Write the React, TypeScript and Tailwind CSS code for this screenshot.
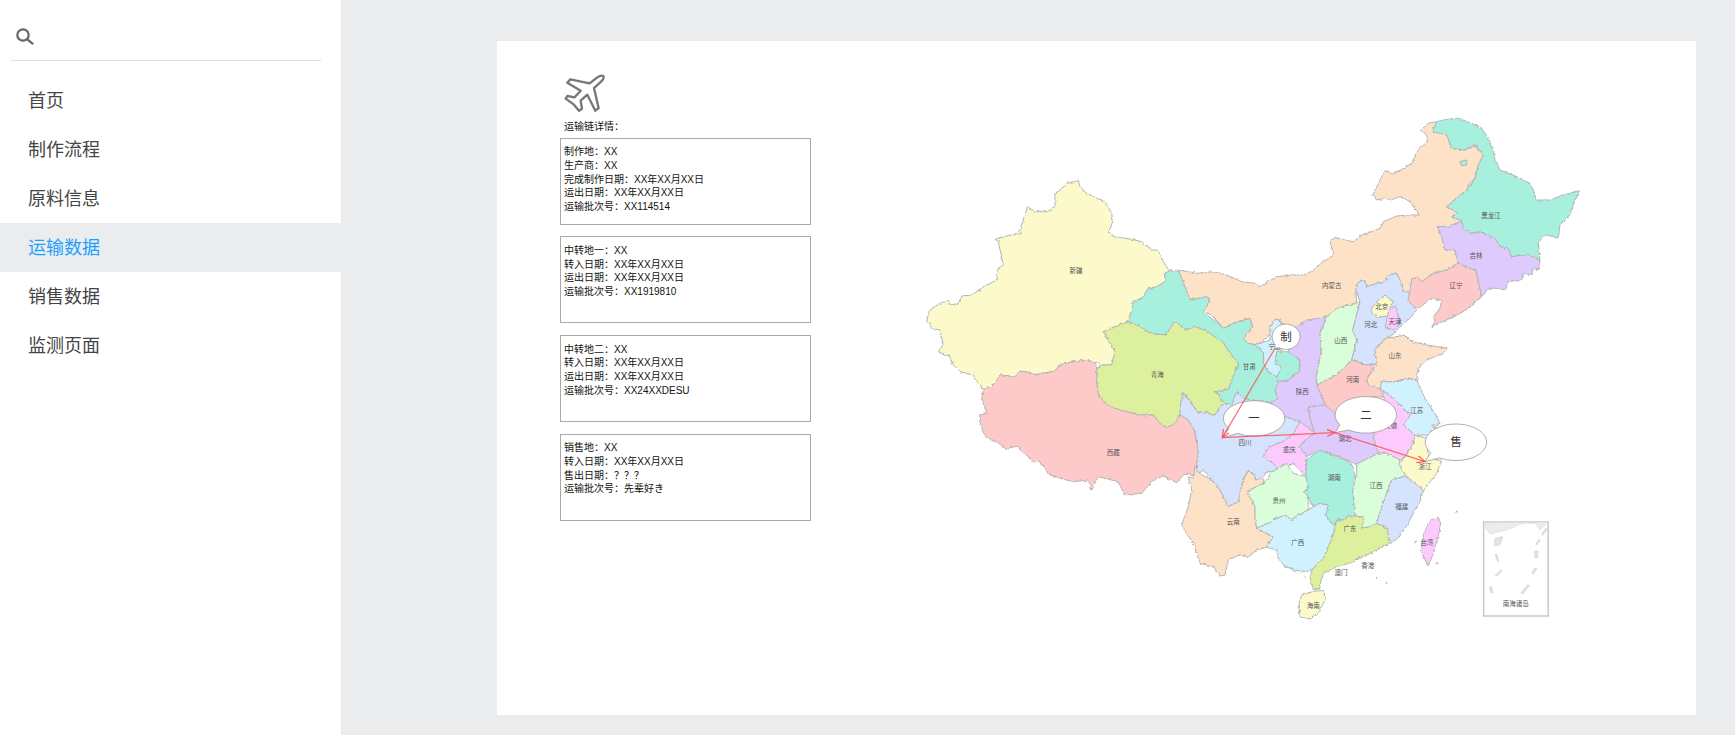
// trace frames: origin of each crop, points are in 3x crop pixels
type Frame = [number, number];
const A: Frame = [920, 170];
const B: Frame = [920, 340];
const C: Frame = [1180, 100];
const D: Frame = [1160, 310];
const E: Frame = [1160, 460];

type Seg = [Frame, string];

const toPoints = (segs: Seg[]) =>
  segs
    .map(([f, s]) =>
      s
        .trim()
        .split(/\s+/)
        .map((p) => {
          const [x, y] = p.split(",").map(Number);
          return `${(f[0] + x / 3).toFixed(1)},${(f[1] + y / 3).toFixed(1)}`;
        })
        .join(" ")
    )
    .join(" ");

const CREAM = "#fcfacb";
const TEAL = "#a6f0dd";
const PEACH = "#fee2c8";
const LIME = "#dcf09e";
const ROSE = "#fec9c9";
const BLUE = "#d6e3fe";
const PURPLE = "#dfcafd";
const PINK = "#fdcafd";
const MINT = "#d9fed9";
const SKY = "#cff2fe";

const provinces: { fill: string; segs: Seg[] }[] = [
  {
    fill: CREAM,
    segs: [
      [A, "440,40 475,32 480,50 500,70 530,85 555,95 575,130 578,155 566,185 580,200 630,207 665,215 695,240 715,240 730,275 748,303 735,310 735,335 710,350 685,355 665,385 640,395 630,440 620,457 550,485 565,510 585,545 575,585"],
      [B, "545,75 525,65 490,60 425,72 400,95 365,100 345,105 320,95 300,95 285,110 240,105 215,140 190,148 170,125 160,105 120,95 100,75 90,50 55,35"],
      [A, "70,525 60,480 35,475 20,445 30,420 60,400 85,392 90,405 115,400 125,378 155,375 190,350 230,330 235,295 250,285 235,215 225,208 290,190 305,195 298,185 322,112 350,125 385,125 405,110 405,70 425,58"],
    ],
  },
  {
    fill: PEACH,
    segs: [
      [C, "770,65 758,95 800,105 815,145 855,150 885,135 910,165 895,195 885,235 868,250 860,270 830,295 800,320 835,340 815,350 845,362 810,380 772,380 785,410 795,450 825,450 835,490 800,510 760,520 725,545 715,535 695,535 690,575 670,575 665,550 650,520 625,525 615,545 590,550 560,560 555,545 540,540 527,570 530,605 490,630 440,650 400,660 370,695 305,670 300,655 270,675 270,705 230,735 205,730 190,715 218,680 210,655 175,665 130,685 100,650 70,630 90,605 85,590 60,595 30,600 15,570"],
      [A, "775,300"],
      [C, "50,520 100,515 140,525 185,545 225,550 240,560 290,530 340,525 375,525 400,510 430,485 462,465 450,425 465,412 490,420 520,425 545,405 575,395 600,385 610,365 650,348 690,345 718,345 690,305 660,290 635,300 615,295 590,300 578,285 600,240 615,212 640,222 665,208 695,190 715,150 742,125 740,105 722,90 745,70"],
    ],
  },
  {
    fill: TEAL,
    segs: [
      [A, "748,303 775,300 795,350 810,390 860,380 870,395 850,425 900,465"],
      [C, "100,650 130,685 175,665 210,655 218,680 190,715 205,730 230,735"],
      [D, "310,125 312,165 325,185 350,200 365,170 345,160 350,125 385,125 420,150 418,185 385,210 355,215 345,240 355,265 330,280 250,265 230,245 215,285 195,280 165,245 205,238 235,160 190,100 140,62 105,50 80,60 45,35"],
      [A, "735,495 690,490 660,470 640,460 620,457 630,440 640,395 665,385 685,355 710,350 735,335 735,310"],
    ],
  },
  {
    fill: LIME,
    segs: [
      [A, "620,457 550,485 565,510 585,545 575,585"],
      [B, "545,75 530,85 530,130 535,165 560,195 600,210 660,225 700,225 720,250 740,262 760,255 780,225 782,190 790,158"],
      [D, "90,270 115,310 130,305 165,315 180,290 195,280 165,245 205,238 235,160 190,100 140,62 105,50 80,60 45,35"],
      [A, "735,495 690,490 660,470 640,460"],
    ],
  },
  {
    fill: ROSE,
    segs: [
      [B, "190,148 215,140 240,105 285,110 300,95 320,95 345,105 365,100 400,95 425,72 490,60 525,65 530,85 530,130 535,165 560,195 600,210 660,225 700,225 720,250 740,262 760,255 780,225 805,240 825,275 835,340 830,375 825,410 805,400 790,405 770,428 730,408 700,420 665,460 615,465 595,425 535,410 515,450 505,420 460,425 420,415 390,405 360,365 340,365 290,320 270,320 262,330 230,305 195,290 180,245 178,225 200,220 185,175"],
    ],
  },
  {
    fill: BLUE,
    segs: [
      [B, "790,158 782,190 780,225 805,240 825,275 835,340 830,375 825,410"],
      [E, "130,30 155,60 180,90 205,140 235,125 250,55 265,32 280,40 285,60 310,55 320,35 355,35"],
      [D, "400,370 420,335 405,330 375,320 330,280 250,265 230,245 215,285 195,280 180,290 165,315 130,305 115,310"],
    ],
  },
  {
    fill: PEACH,
    segs: [
      [E, "85,50 100,55 105,20 118,40 155,60 180,90 205,140 235,125 250,60 265,32 285,45 285,60 312,55 310,68 262,95 285,140 285,175 290,205 340,230 320,262 290,270 265,290 240,285 205,298 195,345 180,348 160,320 120,310 115,290 100,250 70,205 65,195 85,140 95,90"],
    ],
  },
  {
    fill: SKY,
    segs: [[D, "285,105 330,90 330,50 345,28 360,30 385,100 350,125 345,160 365,170 350,200 325,185 312,165 310,125"]],
  },
  {
    fill: PURPLE,
    segs: [[D, "500,20 480,70 485,115 470,195 470,225 490,270 495,285 445,290 450,325 465,370 420,335 405,330 375,320 330,280 355,265 345,240 355,215 385,210 418,185 420,150 385,125 395,60 440,30"]],
  },
  {
    fill: MINT,
    segs: [[D, "500,20 530,-5 600,-25 578,60 590,90 575,150 530,195 500,210 470,225 470,195 485,115 480,70"]],
  },
  {
    fill: BLUE,
    segs: [
      [C, "540,540 555,545 560,560 590,550 615,545 625,525 650,520 665,550 670,575 690,575 682,600 712,628 690,655 665,675 650,690 645,700"],
      [D, "680,85 645,115 648,160 620,165 590,155 575,150 590,90 578,60 600,-25"],
      [C, "527,570"],
    ],
  },
  { fill: CREAM, segs: [[C, "575,625 595,600 615,585 640,605 630,620 625,650 590,650 575,640"]] },
  { fill: PINK, segs: [[C, "625,640 635,620 650,625 652,645 665,668 650,680 640,690 615,680 620,660"]] },
  {
    fill: ROSE,
    segs: [[C, "835,490 800,510 760,520 725,545 715,535 695,535 690,575 682,600 712,628 735,610 755,595 785,600 780,625 760,650 765,665 755,680 800,660 850,635 900,595 905,570 888,510 870,505"]],
  },
  {
    fill: PURPLE,
    segs: [[C, "772,380 810,380 845,362 850,385 870,400 900,395 945,415 960,440 985,445 995,470 1045,462 1080,482 1075,510 1060,505 1055,525 1030,520 1025,540 985,545 975,570 950,565 925,565 905,590 888,510 870,505 835,490 825,450 795,450 785,410"]],
  },
  {
    fill: TEAL,
    segs: [[C, "770,65 800,58 835,55 880,72 905,85 925,115 940,150 945,180 960,210 1000,225 1050,250 1060,270 1065,300 1110,300 1150,285 1198,272 1185,300 1170,345 1140,375 1135,415 1100,405 1075,425 1080,482 1045,462 995,470 985,445 960,440 945,415 900,395 870,400 850,385 845,362 815,350 835,340 800,320 830,295 860,270 885,235 895,195 910,165 885,135 855,150 815,145 800,105 758,95"]],
  },
  { fill: TEAL, segs: [[C, "840,185 858,180 860,195 845,197"]] },
  {
    fill: PEACH,
    segs: [[D, "620,205 650,170 645,120 680,85 735,75 755,95 800,105 862,115 850,130 800,150 775,175 770,210 745,205 700,215 665,215 670,240 625,225"]],
  },
  {
    fill: ROSE,
    segs: [[D, "470,225 500,210 530,195 575,150 620,165 648,160 640,175 620,205 625,225 670,240 665,255 672,262 640,260 525,310 495,285 490,270"]],
  },
  {
    fill: PURPLE,
    segs: [[D, "445,290 495,285 525,310 600,320 650,345 640,380 655,430 590,462 570,455 540,440 480,420 440,440 418,410 440,385 465,370 450,325"]],
  },
  {
    fill: PINK,
    segs: [[D, "420,335 465,370 440,385 418,410 440,440 438,500 400,460 355,480 340,460 310,440 325,410 370,395 400,370"]],
  },
  {
    fill: PINK,
    segs: [[D, "660,235 700,265 740,305 755,310 730,345 765,375 760,400 740,435 720,450 680,430 655,430 640,380 650,345 672,262"]],
  },
  {
    fill: SKY,
    segs: [[D, "665,215 700,215 745,205 770,210 795,265 830,320 840,340 815,355 810,375 765,375 730,345 755,310 740,305 700,265 660,235"]],
  },
  { fill: "#e8e89a", segs: [[D, "815,345 828,345 825,355"]] },
  {
    fill: CREAM,
    segs: [
      [D, "765,375 800,385 805,445 845,450 830,490"],
      [E, "795,85 790,95 740,50 725,30 718,10"],
      [D, "740,435 760,400"],
    ],
  },
  {
    fill: TEAL,
    segs: [
      [D, "438,500 440,450 480,420 520,435 575,462 595,530"],
      [E, "578,90 590,170 585,168 550,180 530,180 525,198 510,185 497,165 505,135 480,130 460,140 445,110 430,95 445,85"],
    ],
  },
  {
    fill: MINT,
    segs: [[E, "262,95 310,68 325,55 330,40 380,10 400,40 438,50 445,85 430,95 445,110 445,150 415,165 395,180 375,165 340,180 315,195 290,205 285,175 285,140"]],
  },
  {
    fill: MINT,
    segs: [
      [D, "590,462 655,430 680,430 720,450"],
      [E, "718,10 725,30 738,48 695,60 680,100 665,140 650,190 630,200 605,205 612,172 585,168 578,90 590,40"],
    ],
  },
  {
    fill: BLUE,
    segs: [[E, "738,48 790,90 780,125 765,150 745,190 715,235 690,250 680,205 650,190 665,140 680,100 695,60"]],
  },
  {
    fill: SKY,
    segs: [[E, "290,205 315,195 340,180 375,165 395,180 415,165 445,150 460,140 480,130 505,135 497,165 510,185 525,198 520,225 505,260 490,295 460,325 440,335 400,330 370,315 355,295 350,270 320,262 340,230"]],
  },
  {
    fill: LIME,
    segs: [[E, "525,198 530,180 550,180 565,168 585,168 612,172 605,205 630,200 650,190 680,205 690,250 640,275 610,290 570,310 530,320 490,340 480,375 480,385 460,390 450,350 460,325 490,295 505,260 520,225"]],
  },
  { fill: CREAM, segs: [[E, "425,405 465,393 492,392 495,420 475,460 445,477 420,470 417,430"]] },
  { fill: PINK, segs: [[E, "815,180 835,172 842,190 835,230 820,280 805,318 795,300 782,270 790,230 800,200"]] },
];

const labels: [Frame, number, number, string][] = [
  [A, 468, 302, "新疆"],
  [B, 580, 336, "西藏"],
  [B, 712, 104, "青海"],
  [D, 268, 168, "甘肃"],
  [C, 455, 555, "内蒙古"],
  [C, 933, 345, "黑龙江"],
  [C, 888, 465, "吉林"],
  [C, 828, 555, "辽宁"],
  [C, 605, 620, "北京"],
  [C, 645, 665, "天津"],
  [C, 572, 672, "河北"],
  [C, 482, 722, "山西"],
  [C, 285, 740, "宁夏"],
  [D, 427, 245, "陕西"],
  [D, 578, 207, "河南"],
  [D, 705, 135, "山东"],
  [D, 770, 300, "江苏"],
  [D, 255, 396, "四川"],
  [D, 555, 384, "湖北"],
  [D, 388, 418, "重庆"],
  [D, 692, 345, "安徽"],
  [D, 795, 468, "浙江"],
  [E, 523, 52, "湖南"],
  [E, 648, 75, "江西"],
  [E, 357, 120, "贵州"],
  [E, 725, 140, "福建"],
  [E, 220, 185, "云南"],
  [E, 413, 246, "广西"],
  [E, 570, 206, "广东"],
  [E, 543, 336, "澳门"],
  [E, 623, 315, "香港"],
  [E, 800, 246, "台湾"],
  [E, 460, 435, "海南"],
  [E, 1067, 430, "南海诸岛"],
];

// dashes of the nine-dash line in the inset
const insetDashes = [
  "1005,235 1028,230 1020,255 1003,257",
  "1006,283 1011,282 1016,303 1012,304",
  "1022,330 1026,333 1010,349 1006,346",
  "988,381 995,380 999,398 993,399",
  "1103,374 1108,377 1088,402 1083,399",
  "1125,323 1131,326 1120,342 1115,339",
  "1124,273 1133,273 1133,293 1124,293",
  "1137,238 1141,241 1130,255 1127,252",
  "1157,205 1162,208 1148,226 1145,223",
];

const islets: [number, number][] = [
  [590, 297],
  [598, 292],
  [650, 353],
  [680, 368],
  [765, 245],
  [830, 310],
  [890, 155],
  [435, 352],
];

const bubbles = [
  { cx: D[0] + 378 / 3, cy: D[1] + 80 / 3, rx: 14, ry: 12.7, tip: [D[0] + 345 / 3, D[1] + 115 / 3], text: "制" },
  { cx: D[0] + 282 / 3, cy: D[1] + 325 / 3, rx: 30.7, ry: 17.7, tip: [D[0] + 187 / 3, D[1] + 383 / 3], text: "一" },
  { cx: D[0] + 618 / 3, cy: D[1] + 315 / 3, rx: 30.7, ry: 18.3, tip: [D[0] + 525 / 3, D[1] + 368 / 3], text: "二" },
  { cx: D[0] + 888 / 3, cy: D[1] + 397 / 3, rx: 30.7, ry: 18.3, tip: [D[0] + 795 / 3, D[1] + 455 / 3], text: "售" },
];

const bubblePath = (b: (typeof bubbles)[number]) => {
  const t = Math.atan2((b.tip[1] - b.cy) / b.ry, (b.tip[0] - b.cx) / b.rx);
  const at = (a: number) => `${(b.cx + b.rx * Math.cos(a)).toFixed(1)} ${(b.cy + b.ry * Math.sin(a)).toFixed(1)}`;
  return `M${at(t + 0.2)} A${b.rx} ${b.ry} 0 1 1 ${at(t - 0.2)} L${b.tip[0]} ${b.tip[1]} Z`;
};

const routes = [
  [bubbles[0].tip, bubbles[1].tip],
  [bubbles[1].tip, bubbles[2].tip],
  [bubbles[2].tip, bubbles[3].tip],
];

const ChinaMap = () => (
  <svg viewBox="920 110 670 520" width={670} height={520} className="shrink-0">
    <defs>
      <marker id="head" markerUnits="userSpaceOnUse" markerWidth="10" markerHeight="10" refX="8" refY="4" orient="auto">
        <path d="M0 0.5L8 4L0 7.5" fill="none" stroke="#ff4a4a" strokeWidth="1.1" />
      </marker>
      {/* roughens the traced borders, same displacement on both sides of a shared edge */}
      <filter id="rough" x="-2%" y="-2%" width="104%" height="104%">
        <feTurbulence type="fractalNoise" baseFrequency="0.3" numOctaves="2" seed="4" result="n" />
        <feDisplacementMap in="SourceGraphic" in2="n" scale="3.2" xChannelSelector="R" yChannelSelector="G" />
        <feGaussianBlur stdDeviation="0.3" />
      </filter>
      <filter id="soft">
        <feGaussianBlur stdDeviation="0.25" />
      </filter>
    </defs>
    <g filter="url(#rough)">
      {provinces.map((p, i) => (
        <polygon key={i} points={toPoints(p.segs)} fill={p.fill} stroke="#b4b4b4" strokeWidth="1" strokeLinejoin="round" />
      ))}
      {islets.map(([x, y], i) => (
        <circle key={i} cx={E[0] + x / 3} cy={E[1] + y / 3} r="0.9" fill="#aaa" />
      ))}
    </g>

    <g filter="url(#soft)">
      <rect x={E[0] + 971 / 3} y={E[1] + 186 / 3} width={64.5} height={94} fill="#fff" stroke="#c9c9c9" strokeWidth="1.5" />
      <polygon
        points={toPoints([[E, "972,195 990,187 1163,187 1140,210 1125,190 1090,190 1040,210 990,222"]])}
        fill="#ececec"
        stroke="#d4d4d4"
        strokeWidth="0.5"
      />
      {insetDashes.map((d, i) => (
        <polygon key={i} points={toPoints([[E, d]])} fill="#e4e4e4" stroke="#c4c4c4" strokeWidth="0.5" />
      ))}
    </g>

    {labels.map(([f, x, y, t]) => (
      <text
        key={t}
        x={f[0] + x / 3}
        y={f[1] + y / 3}
        textAnchor="middle"
        dominantBaseline="central"
        fontSize="6.5"
        fill="#555"
      >
        {t}
      </text>
    ))}

    {bubbles.map((b) => (
      <path key={b.text} d={bubblePath(b)} fill="#fff" stroke="#9a9a9a" strokeWidth="0.8" />
    ))}
    {routes.map(([from, to], i) => (
      <line
        key={i}
        x1={from[0]}
        y1={from[1]}
        x2={to[0]}
        y2={to[1]}
        stroke="#ff4a4a"
        strokeOpacity="0.8"
        strokeWidth="1.2"
        markerEnd="url(#head)"
      />
    ))}
    {bubbles.map((b) => (
      <text
        key={b.text}
        x={b.cx}
        y={b.cy}
        textAnchor="middle"
        dominantBaseline="central"
        fontSize="11.5"
        fill="#333"
      >
        {b.text}
      </text>
    ))}
  </svg>
);

const navItems = ["首页", "制作流程", "原料信息", "运输数据", "销售数据", "监测页面"];

const detailBoxes = [
  ["制作地：XX", "生产商：XX", "完成制作日期：XX年XX月XX日", "运出日期：XX年XX月XX日", "运输批次号：XX114514"],
  ["中转地一：XX", "转入日期：XX年XX月XX日", "运出日期：XX年XX月XX日", "运输批次号：XX1919810"],
  ["中转地二：XX", "转入日期：XX年XX月XX日", "运出日期：XX年XX月XX日", "运输批次号：XX24XXDESU"],
  ["销售地：XX", "转入日期：XX年XX月XX日", "售出日期：？？？", "运输批次号：先辈好き"],
];

export default function App() {
  return (
    <div className="flex h-screen w-full overflow-hidden bg-[#ebecee] font-['Liberation_Sans','Noto_Sans_CJK_SC',sans-serif]">
      <aside className="w-[341px] shrink-0 bg-white">
        <div className="ml-[11px] mr-[20px] flex h-[61px] items-start border-b border-[#dcdfe6] pl-[4px] pt-[27px]">
          <svg viewBox="0 0 19 18" width={19} height={18} fill="none" stroke="#666" strokeWidth="2.2">
            <circle cx="8" cy="8" r="5.7" />
            <path d="M12.3 12.3L17.5 16.6" strokeLinecap="round" />
          </svg>
        </div>
        <nav className="mt-[15px]">
          {navItems.map((item) => (
            <div
              key={item}
              className={
                item === "运输数据"
                  ? "flex h-[49px] items-center bg-[#ebecee] pl-[28px] pt-[2px] text-[18px] text-[#1e9fff]"
                  : "flex h-[49px] items-center pl-[28px] pt-[2px] text-[18px] text-[#444]"
              }
            >
              {item}
            </div>
          ))}
        </nav>
      </aside>

      <main className="flex-1 pl-[156px] pt-[41px]">
        <div className="flex h-[674px] w-[1199px] bg-white pl-[63px]">
          <div className="w-[251px] shrink-0 pt-[32px] text-[10px] leading-[13.67px] text-[#111]">
            <svg viewBox="25 15 130 122" width={43.3} height={40.7} fill="none" stroke="#777" strokeWidth="7" strokeLinejoin="round" className="ml-[3px]">
              <path d="M146 24Q150 30 140 40L118 60L132 120L122 128L98 80L78 98L82 122L73 128L58 110L33 92L38 84L60 88L78 68L38 44L47 34L105 46L128 28Q140 20 146 24Z" />
            </svg>
            <p className="h-[24px] pl-[4px] pt-[6px]">运输链详情：</p>
            <div className="flex flex-col gap-[11.67px]">
              {detailBoxes.map((lines) => (
                <div key={lines[0]} className="h-[87px] border border-[#aaa] pl-[3px] pt-[6.5px]">
                  {lines.map((line) => (
                    <p key={line}>{line}</p>
                  ))}
                </div>
              ))}
            </div>
          </div>
          <div className="ml-[109px] pt-[69px]">
            <ChinaMap />
          </div>
        </div>
      </main>
    </div>
  );
}
